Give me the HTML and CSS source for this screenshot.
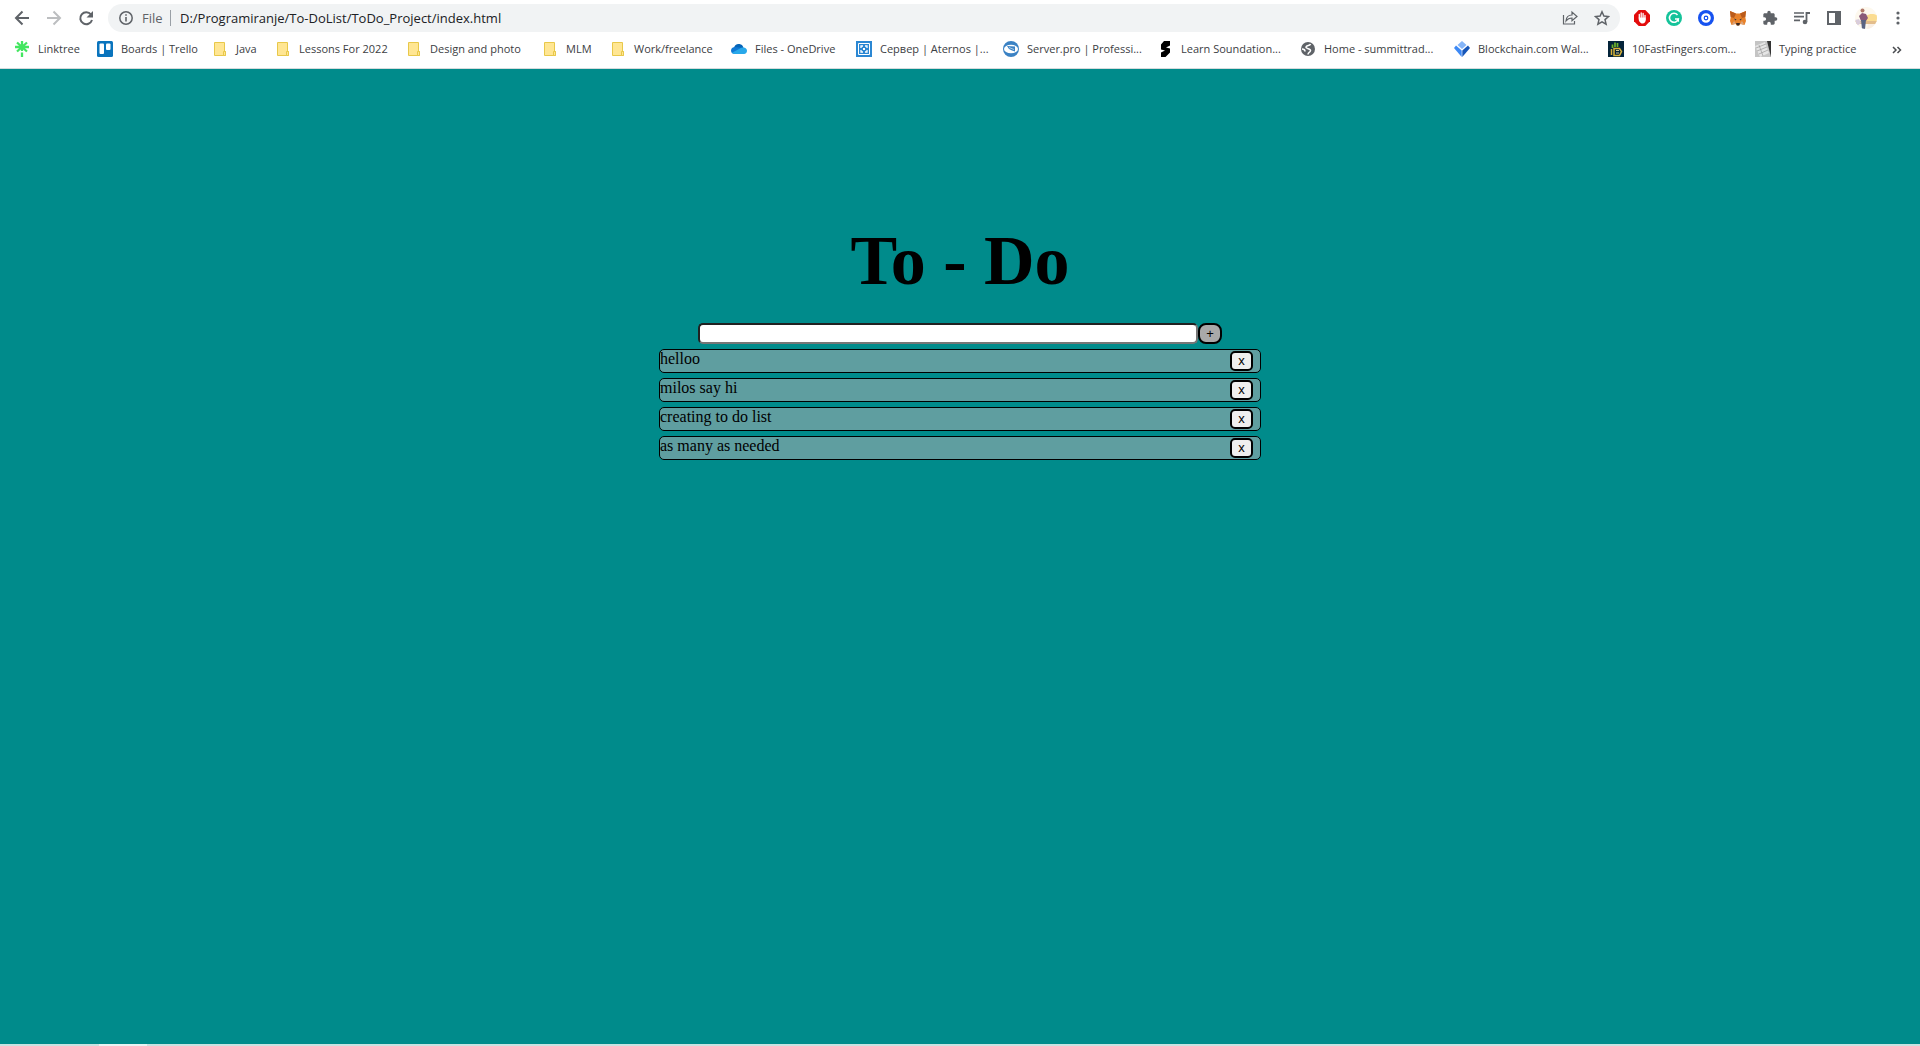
FILE: index.html
```html
<!DOCTYPE html>
<html lang="en">
<head>
<meta charset="utf-8">
<title>To - Do</title>
<link rel="stylesheet" href="styles.css">
</head>
<body>
<header class="browser">
  <div class="toolbar">
    <nav class="tools" aria-label="Navigation">
      <button class="tool" aria-label="Back"><svg width="16" height="16" viewBox="0 0 16 16" fill="none" stroke="#5f6368" stroke-width="2"><path d="M15 8H2M8.500 1.500L2 8l6.500 6.500"/></svg></button>
      <button class="tool" aria-label="Forward"><svg width="16" height="16" viewBox="0 0 16 16" fill="none" stroke="#bcbec0" stroke-width="2"><path d="M1 8h13M7.500 1.500L14 8l-6.500 6.500"/></svg></button>
      <button class="tool" aria-label="Reload"><svg width="16" height="16" viewBox="0 0 16 16"><path d="M13 4.500A6 6 0 1 0 14 10" fill="none" stroke="#5f6368" stroke-width="2"/><path d="M15 1v6.500H8.500z" fill="#5f6368"/></svg></button>
    </nav>
    <div class="address">
      <svg class="info" width="14" height="14" viewBox="0 0 14 14"><circle cx="7" cy="7" r="6.200" fill="none" stroke="#5f6368" stroke-width="1.500"/><path d="M7 6v4.500M7 3.300v1.500" stroke="#5f6368" stroke-width="1.600"/></svg>
      <span class="scheme">File</span>
      <input class="url" aria-label="Address" value="D:/Programiranje/To-DoList/ToDo_Project/index.html">
      <button class="tool" aria-label="Share"><svg width="16" height="16" viewBox="0 0 16 16" fill="none" stroke="#5f6368" stroke-width="1.200"><path d="M1.500 5v9h11v-3"/><path d="M4 11c.3-4 2.500-6 6-6V2l5 4.500-5 4.300V8C7.500 8 5.500 9 4 11z"/></svg></button>
      <button class="tool" aria-label="Bookmark this page"><svg width="16" height="16" viewBox="0 0 16 16"><path d="M8 1.800l1.900 4.300 4.600.4-3.500 3.100 1.100 4.600L8 11.800l-4.100 2.400L5 9.600 1.500 6.500l4.600-.4z" fill="none" stroke="#5f6368" stroke-width="1.500"/></svg></button>
    </div>
    <div class="tools">
      <button class="tool" aria-label="AdBlock"><svg width="16" height="16" viewBox="0 0 16 16"><path d="M4.700 0h6.600L16 4.700v6.600L11.300 16H4.700L0 11.300V4.700z" fill="#e30c0c"/><path d="M5.300 8V4.500M7.200 7.500V3M9.100 7.500V3.500M11 10V5.500" stroke="#fff" stroke-width="1.300" stroke-linecap="round"/><path d="M4.700 7.500h6.900v2.500c0 2-1 3.500-3.200 3.500S4.700 11 4.700 9z" fill="#fff"/></svg></button>
      <button class="tool" aria-label="Grammarly"><svg width="16" height="16" viewBox="0 0 16 16"><circle cx="8" cy="8" r="8" fill="#15c39a"/><path d="M11.500 5A4.500 4.500 0 1 0 12.300 9H9" fill="none" stroke="#fff" stroke-width="1.600"/><path d="M12.300 8.500v3.300" stroke="#fff" stroke-width="1.400"/></svg></button>
      <button class="tool" aria-label="Wallet"><svg width="16" height="16" viewBox="0 0 16 16"><circle cx="8" cy="8" r="8" fill="#1652f0"/><circle cx="8" cy="8" r="3.600" fill="none" stroke="#fff" stroke-width="2.400"/><rect x="7" y="7" width="2" height="2" fill="#fff"/></svg></button>
      <button class="tool" aria-label="MetaMask"><svg width="16" height="16" viewBox="0 0 16 16"><path d="M0 1l6 2.500h4L16 1l-.7 6 .7 4-1.500 4-4-1L9 15.500H7L5.500 14l-4 1L0 11l.7-4z" fill="#e8822a"/><path d="M0 1l6 2.500L4 8 .7 7zM16 1l-6 2.500L12 8l3.300-1z" fill="#ba5b1b"/><path d="M4 8.500l2.500 1-1 1zM12 8.500l-2.500 1 1 1z" fill="#233447"/><path d="M6 13h4l-.8 2.500H6.800z" fill="#3a2a24"/><path d="M1.500 15L4 11l2 2.500zM14.500 15L12 11l-2 2.500z" fill="#d9a47d"/></svg></button>
      <button class="tool" aria-label="Extensions"><svg width="16" height="16" viewBox="0 0 24 24"><path d="M20.500 11H19V7c0-1.100-.9-2-2-2h-4V3.500a2.500 2.500 0 0 0-5 0V5H4c-1.100 0-2 .9-2 2v3.800h1.500a2.700 2.700 0 0 1 0 5.400H2V20c0 1.100.9 2 2 2h3.800v-1.500a2.700 2.700 0 0 1 5.400 0V22H17c1.100 0 2-.9 2-2v-4h1.500a2.500 2.500 0 0 0 0-5z" fill="#5f6368"/></svg></button>
      <button class="tool" aria-label="Media"><svg width="18" height="16" viewBox="0 0 18 16"><path d="M1 3h10M1 6.700h10M1 10.300h6" stroke="#5f6368" stroke-width="1.700"/><path d="M13.500 12V3H17" fill="none" stroke="#5f6368" stroke-width="1.800"/><circle cx="12" cy="12" r="2.300" fill="#5f6368"/></svg></button>
      <button class="tool" aria-label="Side panel"><svg width="14" height="14" viewBox="0 0 14 14"><path d="M0 0h14v14H0zM2 2v10h6V2z" fill="#5f6368" fill-rule="evenodd"/></svg></button>
      <button class="tool" aria-label="Profile"><svg width="22" height="22" viewBox="0 0 22 22"><defs><clipPath id="round"><circle cx="11" cy="11" r="11"/></clipPath></defs><g clip-path="url(#round)"><path d="M0 0h22v22H0z" fill="#fdf8ee"/><path d="M11 9c4-3 8-2 11-1v7H11z" fill="#fbdc90"/><path d="M0 14h22v3H0z" fill="#e3bd8c"/><path d="M13 17h9v5H12z" fill="#f9efe4"/><path d="M4 9l3-3 4 1 2 4-2 3H6z" fill="#8a5a78"/><circle cx="7.500" cy="3.500" r="2" fill="#b0796a"/><path d="M6 13h5l-1 9H7z" fill="#5a6482"/><path d="M0 13l4-1 2 4-4 3z" fill="#d9cddc"/></g></svg></button>
      <button class="tool" aria-label="Menu"><svg width="4" height="14" viewBox="0 0 4 14" fill="#5f6368"><circle cx="2" cy="2" r="1.600"/><circle cx="2" cy="7" r="1.600"/><circle cx="2" cy="12" r="1.600"/></svg></button>
    </div>
  </div>
  <svg class="defs" aria-hidden="true"><symbol id="folder" viewBox="0 0 16 16"><path d="M2.500 1.500h10v9h1v4h-11z" fill="#ffe693" stroke="#e8c84a"/><path d="M11.500 14.500v-4h2v4z" fill="#ffe693" stroke="#e8c84a"/></symbol></svg>
  <nav class="bookmarks" aria-label="Bookmarks">
    <a class="mark" href="#"><svg class="icon" viewBox="0 0 16 16"><path d="M8 0v10M1 6h14M3 1.500l10 9M13 1.500l-10 9M8 11.500V16" stroke="#43e660" stroke-width="2.300" fill="none"/></svg>Linktree</a>
    <a class="mark" href="#"><svg class="icon" viewBox="0 0 16 16"><rect width="16" height="16" rx="1.500" fill="#0a74bd"/><rect x="2.500" y="2.500" width="4.500" height="10.500" rx="1" fill="#fff"/><rect x="9" y="2.500" width="4.500" height="6.500" rx="1" fill="#fff"/></svg>Boards | Trello</a>
    <a class="mark" href="#"><svg class="icon"><use href="#folder"/></svg>Java</a>
    <a class="mark" href="#"><svg class="icon"><use href="#folder"/></svg>Lessons For 2022</a>
    <a class="mark" href="#"><svg class="icon"><use href="#folder"/></svg>Design and photo</a>
    <a class="mark" href="#"><svg class="icon"><use href="#folder"/></svg>MLM</a>
    <a class="mark" href="#"><svg class="icon"><use href="#folder"/></svg>Work/freelance</a>
    <a class="mark" href="#"><svg class="icon" viewBox="0 0 16 16"><path d="M3 7c.5-3 3-4.500 5.500-4 2 .3 3.300 1.500 4 3.500l-3 3z" fill="#0364b8"/><path d="M3.500 6C1 6.300 0 8 0 9.700 0 12 2 13 4 13L13 7z" fill="#0f78d4"/><path d="M12.500 6.500c2 0 3.500 1.300 3.500 3.300S14.800 13 13 13H4c-1.300 0-2.300-.4-3-1.300L9 7.500c1-.7 2-1 3.500-1z" fill="#28a8ea"/></svg>Files - OneDrive</a>
    <a class="mark" href="#"><svg class="icon" viewBox="0 0 16 16"><path d="M0 0h16v16H0z" fill="#2b87d3"/><path d="M2.500 2.500h11v11h-11z" fill="none" stroke="#fff" stroke-width="1"/><path d="M5 7V5h2M9 5h2v2M11 9v2H9M7 11H5V9" fill="none" stroke="#fff" stroke-width="1.300"/><path d="M7 7h2v2H7z" fill="#fff"/></svg>Сервер | Aternos |...</a>
    <a class="mark" href="#"><svg class="icon" viewBox="0 0 16 16"><circle cx="8" cy="8" r="8" fill="#3b82c4"/><ellipse cx="8" cy="8" rx="7" ry="4.300" fill="#fff"/><path d="M4 5l8 .5v5L9 9.500 6 8z" fill="#3b82c4"/><path d="M6 6.500l5 2" stroke="#a9cbe8"/></svg>Server.pro | Professi...</a>
    <a class="mark" href="#"><svg class="icon" viewBox="0 0 16 16"><path d="M7 0h6v4.500L9 6.500l4 1v4L8.500 16H4v-4.500l4-2-4-1V3.500z"/></svg>Learn Soundation...</a>
    <a class="mark" href="#"><svg class="icon" viewBox="0 0 16 16"><circle cx="8" cy="8" r="7" fill="#5f6368"/><path d="M10.500 3c-.5 2-4 1-4.500 3s5 1.500 4.500 3.700S8 11 8 13.500M2 8c1.500 0 3 1 3 2.500" fill="none" stroke="#fff" stroke-width="1.500"/></svg>Home - summittrad...</a>
    <a class="mark" href="#"><svg class="icon" viewBox="0 0 16 16"><path d="M8 0l4.500 4L8 8 3.500 4z" fill="#85b5f8"/><path d="M2 4.500l5.700 5V16L0 7z" fill="#3d89f5"/><path d="M14 4.500l-5.700 5V16L16 7z" fill="#1656b9"/></svg>Blockchain.com Wal...</a>
    <a class="mark" href="#"><svg class="icon" viewBox="0 0 16 16"><path d="M0 0h16v16H0z" fill="#04243a"/><path d="M4.500 7V3.500M7 6V1.500M9.500 6V2" stroke="#6fb52c" stroke-width="1.700"/><path d="M3.500 8v6M6 7.500h5.500l2 3-2 4H6z" fill="none" stroke="#d8b23a" stroke-width="1.500"/><path d="M8 9.500h3M8 12h3" stroke="#d3c68d"/></svg>10FastFingers.com...</a>
    <a class="mark" href="#"><svg class="icon" viewBox="0 0 16 16"><path d="M0 0h16v16H0z" fill="#c4c4c4"/><path d="M12 0h4v16z" fill="#333"/><path d="M0 5l10-4 4 11-9 4z" fill="#e5e5e5"/><path d="M1 7l10-4M2 10l10-4M4 13l9-4M4 4l4 11" stroke="#999" stroke-width=".7"/></svg>Typing practice</a>
    <button class="more" aria-label="More bookmarks"><svg width="10" height="8" viewBox="0 0 10 8" fill="none" stroke="#4a4d51" stroke-width="1.500"><path d="M1 1l3 3-3 3M5.500 1l3 3-3 3"/></svg></button>
  </nav>
</header>
<main class="page">
  <h1 class="title">To - Do</h1>
  <form class="entry">
    <input class="field" type="text" aria-label="New task">
    <button class="add" type="button" aria-label="Add task">+</button>
  </form>
  <ul class="list">
    <li class="task">helloo<button class="remove" aria-label="Remove helloo">x</button></li>
    <li class="task">milos say hi<button class="remove" aria-label="Remove milos say hi">x</button></li>
    <li class="task">creating to do list<button class="remove" aria-label="Remove creating to do list">x</button></li>
    <li class="task">as many as needed<button class="remove" aria-label="Remove as many as needed">x</button></li>
  </ul>
</main>
<footer class="edge"><div class="edge-mark"></div></footer>
</body>
</html>
```
FILE: styles.css
```css
* { box-sizing: border-box; }
body {
  margin: 0;
  min-height: 100vh;
  display: flex;
  flex-direction: column;
  background: #008b8b;
  font-family: "Liberation Serif", serif;
  font-size: 16px;
  color: #000;
}
button { padding: 0; font-family: inherit; }

.browser {
  background: #fff;
  border-bottom: 1px solid #d5dbdc;
  font-family: "Open Sans", "Noto Sans", sans-serif;
}
.defs { display: none; }
.toolbar {
  display: flex;
  align-items: center;
  gap: 6px;
  height: 36px;
  padding: 0 6px;
}
.tools { display: flex; }
.tool {
  display: flex;
  align-items: center;
  justify-content: center;
  width: 32px;
  height: 28px;
  border: 0;
  background: none;
}
.address {
  flex: 1;
  display: flex;
  align-items: center;
  height: 28px;
  padding: 0 2px 0 11px;
  border-radius: 14px;
  background: #f1f3f4;
  font-size: 13px;
}
.info { margin-right: 9px; }
.scheme {
  width: 29px;
  line-height: 16px;
  border-right: 1px solid #9aa0a6;
  color: #5f6368;
}
.url {
  flex: 1;
  border: 0;
  padding: 0 0 0 9px;
  background: none;
  color: #202124;
  font: inherit;
}
.bookmarks {
  display: grid;
  grid-template-columns: 83px 115px 63px 131px 136px 68px 121px 125px 147px 154px 143px 154px 154px 147px 1fr 32px;
  align-items: center;
  height: 32px;
  padding: 0 7px 6px 14px;
}
.mark {
  display: flex;
  align-items: center;
  gap: 8px;
  color: #3c4043;
  font-size: 11px;
  line-height: 16px;
  white-space: nowrap;
  text-decoration: none;
}
.icon { flex: none; width: 16px; height: 16px; }
.more { border: 0; background: none; }

.page {
  flex: 1;
  display: flex;
  flex-direction: column;
  align-items: center;
  padding-top: 150px;
}
.title {
  margin: 0 0 21px;
  font-size: 70px;
  line-height: 83px;
}
.entry {
  display: flex;
  width: 524px;
  max-width: 100%;
}
.field {
  flex: 1;
  height: 21px;
  border: 2px inset #767676;
  border-radius: 5px;
  background: #fff;
}
.add {
  width: 24px;
  height: 21px;
  border: 2px solid #000;
  border-radius: 8px;
  background: #a9a9a9;
  font-family: "Liberation Sans", sans-serif;
  font-size: 13px;
  line-height: 15px;
}
.list {
  display: flex;
  flex-direction: column;
  gap: 5px;
  width: 602px;
  max-width: 100%;
  margin: 5px 0;
  padding: 0;
  list-style: none;
}
.task {
  display: flex;
  justify-content: space-between;
  height: 24px;
  padding-right: 7px;
  border: 1px solid #000;
  border-radius: 5px;
  background: #5f9ea0;
  line-height: 18px;
}
.remove {
  width: 23px;
  height: 20px;
  margin-top: 1px;
  border: 2px solid #000;
  border-radius: 5px;
  background: #efefef;
  font-family: "Liberation Sans", sans-serif;
  font-size: 13px;
  line-height: 16px;
}
.edge { height: 2px; padding-left: 99px; background: #c8e3e1; }
.edge-mark { width: 48px; height: 2px; background: #e8f5f3; }
```
